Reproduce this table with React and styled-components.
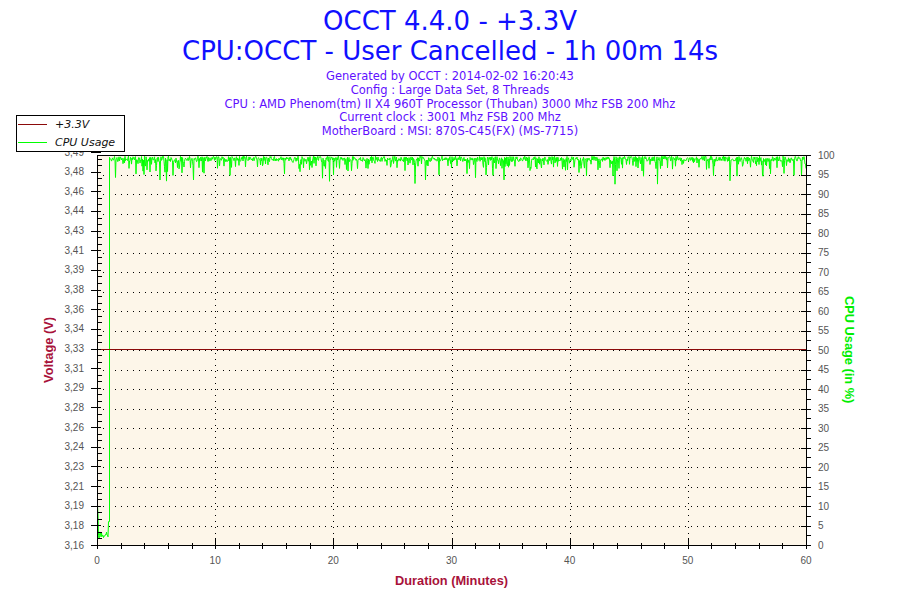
import React, { useMemo } from "react";
import styled, { createGlobalStyle } from "styled-components";

const GlobalStyle = createGlobalStyle`
  html, body { margin: 0; padding: 0; background: #ffffff; }
  #root { width: 900px; height: 600px; }
`;

const Page = styled.div`
  position: relative;
  width: 900px;
  height: 600px;
  display: flex;
  flex-direction: column;
  background: #ffffff;
  font-family: "DejaVu Sans", Verdana, sans-serif;
  overflow: hidden;
`;

const Header = styled.header`
  box-sizing: border-box;
  height: 145px;
  padding-top: 6px;
  display: flex;
  flex-direction: column;
  align-items: center;
`;

const Title = styled.div`
  font-size: 26px;
  line-height: 30px;
  color: #1010ff;
  white-space: nowrap;
`;

const InfoList = styled.div`
  margin-top: 4px;
  display: flex;
  flex-direction: column;
  align-items: center;
`;

const InfoLine = styled.div`
  font-size: 11.5px;
  line-height: 13.75px;
  color: #5f10ff;
  white-space: nowrap;
`;

const Legend = styled.div`
  position: absolute;
  left: 16px;
  top: 115px;
  box-sizing: border-box;
  width: 109px;
  height: 37px;
  border: 1px solid #000;
  background: #fff;
  display: flex;
  flex-direction: column;
  gap: 2px;
  padding-left: 1px;
`;

const LegendRow = styled.div`
  height: 16px;
  display: flex;
  align-items: center;
`;

const LegendSwatch = styled.span`
  width: 29px;
  height: 1px;
  background: ${(p) => p.$color};
`;

const LegendLabel = styled.span`
  margin-left: 8px;
  font-size: 11px;
  font-style: italic;
  color: #111;
  white-space: nowrap;
`;

const ChartRow = styled.div`
  display: flex;
  height: 425px;
`;

const AxisColumn = styled.div`
  box-sizing: border-box;
  width: ${(p) => p.$width}px;
  padding: ${(p) => p.$padding};
  display: flex;
  align-items: center;
  justify-content: ${(p) => p.$justify};
`;

const AxisTitle = styled.div`
  writing-mode: vertical-rl;
  transform: ${(p) => (p.$flip ? "rotate(180deg)" : "none")};
  font-family: "Liberation Sans", Arial, sans-serif;
  font-weight: bold;
  font-size: 12.8px;
  line-height: 14px;
  color: ${(p) => p.$color};
  white-space: nowrap;
`;

const PlotSvg = styled.svg`
  display: block;
  flex: none;
`;

const Footer = styled.div`
  margin-top: 3px;
  margin-left: 97px;
  width: 709px;
  text-align: center;
  font-family: "Liberation Sans", Arial, sans-serif;
  font-weight: bold;
  font-size: 12.8px;
  line-height: 16px;
  color: #a8123a;
`;

const SVG_W = 776;
const SVG_H = 425;
const PX0 = 33;
const PY0 = 10;
const PW = 709;
const PH = 390;
const PX1 = PX0 + PW;
const PY1 = PY0 + PH;

const VOLT_LABELS = [
  "3,16", "3,18", "3,19", "3,21", "3,23", "3,24", "3,26", "3,28", "3,29", "3,31", "3,33",
  "3,34", "3,36", "3,38", "3,39", "3,41", "3,43", "3,44", "3,46", "3,48", "3,49",
];

function mulberry32(a) {
  return function () {
    a |= 0;
    a = (a + 0x6d2b79f5) | 0;
    let t = Math.imul(a ^ (a >>> 15), 1 | a);
    t = (t + Math.imul(t ^ (t >>> 7), 61 | t)) ^ t;
    return ((t ^ (t >>> 14)) >>> 0) / 4294967296;
  };
}

const yP = (p) => PY1 - p * 3.9;

function buildCpu() {
  const r = mulberry32(20140202);
  const pts = [
    [33.5, yP(10)],
    [34, yP(8)],
    [34.5, yP(2.5)],
  ];
  for (let x = 35; x <= 44; x += 0.5) pts.push([x, yP(1.6 + r() * 1.8)]);
  pts.push([44.5, yP(6)], [45.5, yP(6)], [45.5, yP(99.4)]);
  for (let x = 46; x <= PX1; x += 0.5) {
    const q = r();
    let v;
    if (q < 0.009) v = 92.5 + r() * 2;
    else if (q < 0.04) v = 94.5 + r() * 2;
    else if (q < 0.17) v = 96.5 + r() * 1.6;
    else v = 98.3 + r() * 1.4;
    pts.push([x, yP(Math.min(v, 99.8))]);
  }
  return pts.map(([x, y]) => `${x},${y.toFixed(1)}`).join(" ");
}

const crisp = (v) => Math.round(v) + 0.5;

function Chart() {
  const cpu = useMemo(buildCpu, []);
  const rowY = (i) => PY1 - i * 19.5;
  const voltY = (i) => PY1 - i * 19.65;
  const minX = (m) => PX0 + (m * PW) / 60;

  const hGrid = [];
  const leftTicks = [];
  const rightTicks = [];
  for (let i = 0; i <= 20; i++) {
    const y = crisp(rowY(i));
    const yv = crisp(voltY(i));
    if (i > 0 && i < 20) {
      hGrid.push(<line key={`hg${i}`} x1={PX0} x2={PX1} y1={y} y2={y} stroke="#000" strokeDasharray="1 5" />);
    }
    leftTicks.push(<line key={`lt${i}`} x1={27} x2={37} y1={yv} y2={yv} stroke="#000" />);
    rightTicks.push(<line key={`rt${i}`} x1={PX1 - 5} x2={PX1 + 5} y1={y} y2={y} stroke="#000" />);
    if (i < 20) {
      for (const f of [1 / 3, 2 / 3]) {
        const ym = crisp(voltY(i + f));
        leftTicks.push(<line key={`lm${i}${f}`} x1={PX0} x2={PX0 + 5} y1={ym} y2={ym} stroke="#000" />);
      }
      const yr = crisp(rowY(i + 0.5));
      rightTicks.push(<line key={`rm${i}`} x1={PX1} x2={PX1 + 5} y1={yr} y2={yr} stroke="#000" />);
    }
  }

  const vGrid = [];
  const bottomTicks = [];
  for (let m = 0; m <= 60; m += 2) {
    const x = crisp(minX(m));
    const major = m % 10 === 0;
    bottomTicks.push(
      <line key={`bt${m}`} x1={x} x2={x} y1={major ? PY1 - 7 : PY1 - 2} y2={PY1 + 4} stroke="#000" />
    );
    if (major && m > 0 && m < 60) {
      vGrid.push(<line key={`vg${m}`} x1={x} x2={x} y1={PY0} y2={PY1} stroke="#000" strokeDasharray="1 5" />);
    }
  }

  const labelStyle = { fontFamily: "'Liberation Sans', Arial, sans-serif", fontSize: 10, fill: "#555" };

  return (
    <PlotSvg width={SVG_W} height={SVG_H} viewBox={`0 0 ${SVG_W} ${SVG_H}`}>
      <rect x={PX0} y={PY0} width={PW} height={PH} fill="#fdf6e9" />
      <g shapeRendering="crispEdges">{hGrid}{vGrid}</g>
      <polyline points={cpu} fill="none" stroke="#00ff00" strokeWidth="1" />
      <line x1={PX0} x2={PX1} y1={204.5} y2={204.5} stroke="#8b0a0a" shapeRendering="crispEdges" />
      <g shapeRendering="crispEdges">
        <line x1={PX0 + 0.5} x2={PX0 + 0.5} y1={PY0} y2={PY1 + 1} stroke="#000" />
        <line x1={PX1 + 0.5} x2={PX1 + 0.5} y1={PY0} y2={PY1 + 1} stroke="#000" />
        <line x1={PX0} x2={PX1 + 1} y1={PY0 + 0.5} y2={PY0 + 0.5} stroke="#000" />
        <line x1={PX0} x2={PX1 + 1} y1={PY1 + 0.5} y2={PY1 + 0.5} stroke="#000" />
        {leftTicks}
        {rightTicks}
        {bottomTicks}
      </g>
      <g style={labelStyle}>
        {VOLT_LABELS.map((t, i) => (
          <text key={`vl${i}`} x={20} y={voltY(i) + 3.5} textAnchor="end">{t}</text>
        ))}
        {VOLT_LABELS.map((_, i) => (
          <text key={`cl${i}`} x={PX1 + 12} y={rowY(i) + 3.5}>{i * 5}</text>
        ))}
        {[0, 10, 20, 30, 40, 50, 60].map((m) => (
          <text key={`ml${m}`} x={minX(m)} y={419} textAnchor="middle">{m}</text>
        ))}
      </g>
    </PlotSvg>
  );
}

export default function App() {
  return (
    <Page>
      <GlobalStyle />
      <Header>
        <Title>OCCT 4.4.0 - +3.3V</Title>
        <Title>CPU:OCCT - User Cancelled - 1h 00m 14s</Title>
        <InfoList>
          <InfoLine>Generated by OCCT : 2014-02-02 16:20:43</InfoLine>
          <InfoLine>Config : Large Data Set, 8 Threads</InfoLine>
          <InfoLine>CPU : AMD Phenom(tm) II X4 960T Processor (Thuban) 3000 Mhz FSB 200 Mhz</InfoLine>
          <InfoLine>Current clock : 3001 Mhz FSB 200 Mhz</InfoLine>
          <InfoLine>MotherBoard : MSI: 870S-C45(FX) (MS-7715)</InfoLine>
        </InfoList>
      </Header>
      <ChartRow>
        <AxisColumn $width={64} $padding="10px 8px 25px 0" $justify="flex-end">
          <AxisTitle $flip $color="#a8123a">Voltage (V)</AxisTitle>
        </AxisColumn>
        <Chart />
        <AxisColumn $width={60} $padding="10px 0 25px 2px" $justify="flex-start">
          <AxisTitle $color="#00ee00">CPU Usage (in %)</AxisTitle>
        </AxisColumn>
      </ChartRow>
      <Footer>Duration (Minutes)</Footer>
      <Legend>
        <LegendRow>
          <LegendSwatch $color="#8b0a0a" />
          <LegendLabel>+3.3V</LegendLabel>
        </LegendRow>
        <LegendRow>
          <LegendSwatch $color="#00ff00" />
          <LegendLabel>CPU Usage</LegendLabel>
        </LegendRow>
      </Legend>
    </Page>
  );
}
